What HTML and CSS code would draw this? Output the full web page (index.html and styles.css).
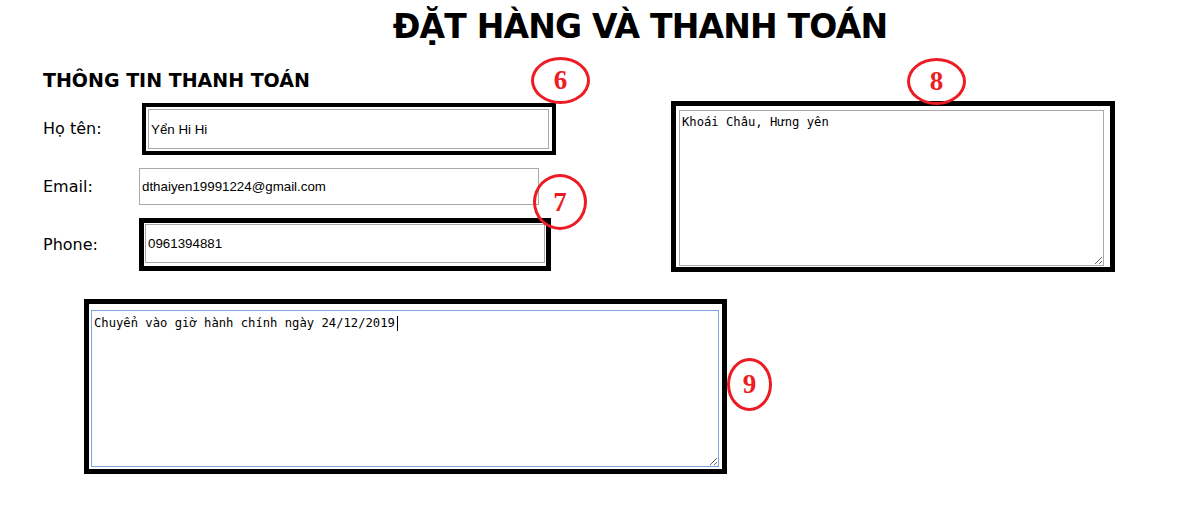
FILE: index.html
```html
<!DOCTYPE html>
<html lang="vi">
<head>
<meta charset="utf-8">
<title>Đặt hàng và thanh toán</title>
<link rel="stylesheet" href="styles.css">
</head>
<body>
<div class="page">
  <h1 class="title">ĐẶT HÀNG VÀ THANH TOÁN</h1>
  <div class="main">
    <section class="billing">
      <h2 class="section-title">THÔNG TIN THANH TOÁN</h2>
      <div class="row row-name">
        <label class="label">Họ tên:</label>
        <div class="mark mark-name"><input class="field field-name" type="text" value="Yển Hi Hi"></div>
      </div>
      <div class="row row-email">
        <label class="label">Email:</label>
        <input class="field field-email" type="text" value="dthaiyen19991224@gmail.com">
      </div>
      <div class="row row-phone">
        <label class="label">Phone:</label>
        <div class="mark mark-phone"><input class="field field-phone" type="text" value="0961394881"></div>
      </div>
    </section>
    <div class="mark mark-address"><textarea class="area area-address">Khoái Châu, Hưng yên</textarea></div>
  </div>
  <div class="mark mark-note"><textarea class="area area-note">Chuyển vào giờ hành chính ngày 24/12/2019</textarea></div>

  <div class="badge badge-6">6</div>
  <div class="badge badge-7">7</div>
  <div class="badge badge-8">8</div>
  <div class="badge badge-9">9</div>
  <div class="caret"></div>
</div>
</body>
</html>
```

FILE: styles.css
```css
html, body {
  margin: 0;
  padding: 0;
  background: #fff;
}

.page {
  position: relative;
  width: 1190px;
  height: 506px;
  overflow: hidden;
  font-family: "DejaVu Sans", Verdana, sans-serif;
  color: #000;
}

.title {
  margin: 8px 0 0;
  padding-left: 90px;
  text-align: center;
  font-size: 33px;
  line-height: 38px;
  font-weight: bold;
  letter-spacing: -0.8px;
}

.main {
  display: flex;
  align-items: flex-start;
  padding-left: 43px;
}

.billing {
  width: 513px;
  flex: 0 0 auto;
}

.section-title {
  margin: 23px 0 12px;
  font-size: 19px;
  line-height: 22px;
  font-weight: bold;
}

.row {
  display: flex;
  align-items: center;
}

.row-email,
.row-phone {
  margin-top: 13px;
}

.label {
  width: 96px;
  flex: 0 0 auto;
  font-size: 16px;
  line-height: 20px;
}

.mark {
  border: 4px solid #000;
  background: #fff;
  box-sizing: border-box;
}

.mark-name {
  margin-left: 3px;
  padding: 2px 3px 2px 2px;
}

.mark-phone {
  border-width: 5px;
  padding: 1px 1px 3px 1px;
}

.field {
  display: block;
  box-sizing: border-box;
  width: 400px;
  margin: 0;
  padding: 1px 2px;
  border: 1px solid #a9a9a9;
  font-family: "Liberation Sans", Arial, sans-serif;
  font-size: 13.33px;
  color: #000;
  background: #fff;
  outline: none;
}

.field-name {
  width: 401px;
  height: 40px;
}

.field-email {
  height: 37px;
}

.field-phone {
  height: 39px;
}

.mark-address {
  margin-left: 115px;
  margin-top: 55px;
  border-width: 5px;
  padding: 4px 6px 1px 3px;
}

.area {
  display: block;
  box-sizing: border-box;
  margin: 0;
  padding: 4px 2px 2px;
  border: 1px solid #a9a9a9;
  font-family: "DejaVu Sans Mono", Consolas, monospace;
  font-size: 12.2px;
  line-height: 15px;
  color: #000;
  background: #fff;
  outline: none;
}

.area-address {
  width: 425px;
  height: 156px;
}

.mark-note {
  margin: 27px 0 0 84px;
  width: 643px;
  border-width: 5px;
  padding: 6px 3px 2px 2px;
}

.area-note {
  width: 628px;
  height: 157px;
  border-color: #7ea4de;
  padding-top: 5px;
}

.badge {
  position: absolute;
  box-sizing: border-box;
  border: 3px solid #ed1c24;
  border-radius: 50%;
  display: flex;
  align-items: center;
  justify-content: center;
  font-family: "Liberation Serif", "Times New Roman", serif;
  font-weight: bold;
  font-size: 27px;
  color: #ed1c24;
  background: transparent;
}

.badge-6 {
  left: 531px;
  top: 57px;
  width: 59px;
  height: 47px;
}

.badge-7 {
  left: 533px;
  top: 174px;
  width: 54px;
  height: 56px;
}

.badge-8 {
  left: 907px;
  top: 58px;
  width: 59px;
  height: 47px;
}

.badge-9 {
  left: 727px;
  top: 358px;
  width: 45px;
  height: 53px;
}

.caret {
  position: absolute;
  left: 397px;
  top: 316px;
  width: 1px;
  height: 15px;
  background: #000;
}
```
